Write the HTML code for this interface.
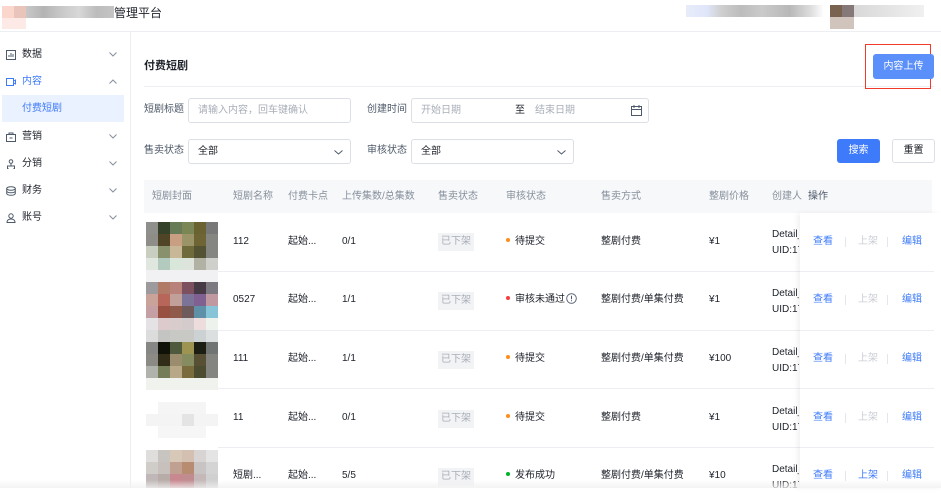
<!DOCTYPE html>
<html><head><meta charset="utf-8"><style>
*{margin:0;padding:0;box-sizing:border-box;line-height:18px}
body{width:941px;height:488px;overflow:hidden;background:#fff;font-family:"Liberation Sans","Noto Sans CJK SC",sans-serif;font-size:10px;color:#1d2129;position:relative}
.abs{position:absolute;white-space:nowrap}
.hdr{left:0;top:0;width:941px;height:32px;border-bottom:1px solid #eceef1;background:#fff}
.side{left:0;top:32px;width:131px;height:456px;border-right:1px solid #eceef1}
.mi{position:absolute;left:0;width:125px;height:18px;font-size:10px;color:#1d2129}
.mi .ic{position:absolute;left:6px;top:4px;width:10px;height:10px}
.mi .t{position:absolute;left:22px;top:0}
.mi .ar{position:absolute;left:109px;top:6px}
.inp{border:1px solid #dcdfe6;border-radius:3px;height:25px;background:#fff}
.ph{color:#a9aeb8;font-size:10px}
.lbl{font-size:10px;color:#4e5969}
.th{font-size:10px;color:#86909c}
.cell{font-size:10px;color:#1d2129}
.tag{background:#f2f3f5;color:#a9aeb8;font-size:10px;padding:2px 3px;line-height:14px}
.dot{display:inline-block;width:4px;height:4px;border-radius:50%;margin-right:5px;vertical-align:middle;position:relative;top:-1px}
.lnk{color:#3e7bfa;font-size:10px}
.dis{color:#c9cdd4;font-size:10px}
.sep{width:1px;height:10px;background:#e5e6eb}
.det{line-height:16px;width:27px;overflow:hidden}
</style></head><body>
<div class="abs hdr"></div>
<div class="abs" style="left:2px;top:6px;width:12px;height:12px;background:#fbd6cc"></div>
<div class="abs" style="left:14px;top:6px;width:12px;height:12px;background:#e8c4bb"></div>
<div class="abs" style="left:26px;top:6px;width:88px;height:12px;background:linear-gradient(90deg,#c8c8c8,#b4b4b4 20%,#c8c8c8 40%,#d8d8d8 60%,#bcbcbc 80%,#c4c4c4)"></div>
<div class="abs" style="left:2px;top:18px;width:24px;height:11px;background:#fdeae6"></div>
<div class="abs" style="left:114px;top:5px;font-size:12px;line-height:16px;color:#1d2129">管理平台</div>
<div class="abs" style="left:686px;top:5px;width:138px;height:12px;background:linear-gradient(90deg,#e8ecfa 0,#e0e6fa 15%,#d0d0d0 25%,#bcbcbc 40%,#cacaca 55%,#b8b8b8 75%,#dcdcdc 90%,#fff)"></div>
<div class="abs" style="left:830px;top:5px;width:12px;height:12px;background:#7a6250"></div>
<div class="abs" style="left:842px;top:5px;width:12px;height:12px;background:#857878"></div>
<div class="abs" style="left:854px;top:5px;width:70px;height:12px;background:linear-gradient(90deg,#d8d8d8,#e4e4e4,#f0f0f0)"></div>
<div class="abs" style="left:830px;top:17px;width:24px;height:12px;background:#d0c4bc"></div>

<div class="abs side"></div>
<div class="mi" style="top:46px"><svg class="ic" viewBox="0 0 10 10"><rect x=".5" y=".5" width="9" height="9" fill="none" stroke="#4e5969"/><path d="M3 7V5M5 7V3M7 7V4" stroke="#4e5969"/></svg><span class="t">数据</span><svg class="ar" width="8" height="5" viewBox="0 0 8 5"><path d="M.5.5L4 4 7.5.5" fill="none" stroke="#86909c"/></svg></div>
<div class="mi" style="top:73px;color:#3e7bfa"><svg class="ic" viewBox="0 0 10 10"><rect x=".5" y="1.5" width="7" height="7" fill="none" stroke="#3e7bfa"/><path d="M7.5 4L9.5 3V7L7.5 6" fill="none" stroke="#3e7bfa"/></svg><span class="t">内容</span><svg class="ar" width="8" height="5" viewBox="0 0 8 5"><path d="M.5 4.5L4 1 7.5 4.5" fill="none" stroke="#86909c"/></svg></div>
<div class="abs" style="left:2px;top:95px;width:122px;height:27px;background:#eaf1ff"></div>
<div class="abs" style="left:22px;top:100px;color:#3e7bfa;font-size:10px">付费短剧</div>
<div class="mi" style="top:128px"><svg class="ic" viewBox="0 0 10 10"><rect x=".5" y="2.5" width="9" height="7" fill="none" stroke="#4e5969"/><path d="M3 2.5V1h4v1.5M3.5 6h3" fill="none" stroke="#4e5969"/></svg><span class="t">营销</span><svg class="ar" width="8" height="5" viewBox="0 0 8 5"><path d="M.5.5L4 4 7.5.5" fill="none" stroke="#86909c"/></svg></div>
<div class="mi" style="top:155px"><svg class="ic" viewBox="0 0 10 10"><circle cx="5" cy="2.5" r="1.8" fill="none" stroke="#4e5969"/><path d="M5 4.5v2M1.5 9.5v-2.5h7v2.5M1 9.5h1.5M7.5 9.5h1.5" fill="none" stroke="#4e5969"/></svg><span class="t">分销</span><svg class="ar" width="8" height="5" viewBox="0 0 8 5"><path d="M.5.5L4 4 7.5.5" fill="none" stroke="#86909c"/></svg></div>
<div class="mi" style="top:182px"><svg class="ic" viewBox="0 0 10 10"><ellipse cx="5" cy="2.5" rx="4.3" ry="1.8" fill="none" stroke="#4e5969"/><path d="M.7 2.5v5c0 1 2 1.8 4.3 1.8s4.3-.8 4.3-1.8v-5M.7 5c0 1 2 1.8 4.3 1.8S9.3 6 9.3 5" fill="none" stroke="#4e5969"/></svg><span class="t">财务</span><svg class="ar" width="8" height="5" viewBox="0 0 8 5"><path d="M.5.5L4 4 7.5.5" fill="none" stroke="#86909c"/></svg></div>
<div class="mi" style="top:209px"><svg class="ic" viewBox="0 0 10 10"><circle cx="5" cy="3" r="2.2" fill="none" stroke="#4e5969"/><path d="M1 9.5c0-2.5 2-3.5 4-3.5s4 1 4 3.5z" fill="none" stroke="#4e5969"/></svg><span class="t">账号</span><svg class="ar" width="8" height="5" viewBox="0 0 8 5"><path d="M.5.5L4 4 7.5.5" fill="none" stroke="#86909c"/></svg></div>

<div class="abs" style="left:144px;top:57px;font-size:11px;font-weight:bold">付费短剧</div>
<div class="abs" style="left:144px;top:86px;width:790px;height:1px;background:#eceef1"></div>
<div class="abs" style="left:865px;top:44px;width:66px;height:45px;border:1.5px solid #f23a2a"></div>
<div class="abs" style="left:873px;top:54px;width:61px;height:25px;background:#5b8ff9;border-radius:3px;color:#fff;font-size:10px;line-height:25px;text-align:center">内容上传</div>

<div class="abs lbl" style="left:144px;top:101px">短剧标题</div>
<div class="abs inp" style="left:188px;top:98px;width:163px"><span class="abs ph" style="left:9px;top:3px">请输入内容，回车键确认</span></div>
<div class="abs lbl" style="left:367px;top:101px">创建时间</div>
<div class="abs inp" style="left:411px;top:98px;width:238px">
<span class="abs ph" style="left:9px;top:3px">开始日期</span>
<span class="abs" style="left:103px;top:3px;font-size:10px">至</span>
<span class="abs ph" style="left:123px;top:3px">结束日期</span>
<svg class="abs" style="left:219px;top:6px" width="11" height="11" viewBox="0 0 11 11"><rect x=".5" y="1.5" width="10" height="9" fill="none" stroke="#4e5969"/><path d="M.5 4.5h10M3 0v3M8 0v3" stroke="#4e5969"/></svg></div>

<div class="abs lbl" style="left:144px;top:142px">售卖状态</div>
<div class="abs inp" style="left:188px;top:139px;width:163px"><span class="abs" style="left:9px;top:3px">全部</span><svg class="abs" style="left:145px;top:10px" width="9" height="5" viewBox="0 0 9 5"><path d="M.5.5L4.5 4 8.5.5" fill="none" stroke="#4e5969"/></svg></div>
<div class="abs lbl" style="left:367px;top:142px">审核状态</div>
<div class="abs inp" style="left:411px;top:139px;width:163px"><span class="abs" style="left:9px;top:3px">全部</span><svg class="abs" style="left:145px;top:10px" width="9" height="5" viewBox="0 0 9 5"><path d="M.5.5L4.5 4 8.5.5" fill="none" stroke="#4e5969"/></svg></div>
<div class="abs" style="left:837px;top:139px;width:43px;height:24px;background:#3e7bfa;border-radius:3px;color:#fff;line-height:24px;text-align:center">搜索</div>
<div class="abs" style="left:892px;top:139px;width:43px;height:24px;border:1px solid #dcdfe6;border-radius:3px;line-height:22px;text-align:center">重置</div>

<div class="abs" style="left:144px;top:180px;width:788px;height:33px;background:#f7f8fa"></div>
<div class="abs th" style="left:152px;top:188px">短剧封面</div>
<div class="abs th" style="left:233px;top:188px">短剧名称</div>
<div class="abs th" style="left:288px;top:188px">付费卡点</div>
<div class="abs th" style="left:342px;top:188px">上传集数/总集数</div>
<div class="abs th" style="left:438px;top:188px">售卖状态</div>
<div class="abs th" style="left:506px;top:188px">审核状态</div>
<div class="abs th" style="left:601px;top:188px">售卖方式</div>
<div class="abs th" style="left:709px;top:188px">整剧价格</div>
<div class="abs th" style="left:772px;top:188px">创建人</div>
<div class="abs th" style="left:808px;top:188px;color:#4e5969">操作</div>

<div class="abs" style="left:218px;top:271px;width:716px;height:1px;background:#eceef1"></div>
<div class="abs" style="left:218px;top:330px;width:716px;height:1px;background:#eceef1"></div>
<div class="abs" style="left:218px;top:388px;width:716px;height:1px;background:#eceef1"></div>
<div class="abs" style="left:218px;top:447px;width:716px;height:1px;background:#eceef1"></div>
<div class="abs" style="left:800px;top:213px;width:141px;height:275px;background:#fff;box-shadow:-3px 0 5px rgba(0,0,0,.05)"></div>
<div class="abs" style="left:800px;top:271px;width:134px;height:1px;background:#eceef1"></div>
<div class="abs" style="left:800px;top:330px;width:134px;height:1px;background:#eceef1"></div>
<div class="abs" style="left:800px;top:388px;width:134px;height:1px;background:#eceef1"></div>
<div class="abs" style="left:800px;top:447px;width:134px;height:1px;background:#eceef1"></div>

<svg class="abs" style="left:146px;top:222px" width="72" height="266" viewBox="0 0 72 266" shape-rendering="crispEdges">
<rect x="0" y="0" width="12" height="12" fill="#8f8f8c"/><rect x="12" y="0" width="12" height="12" fill="#354229"/><rect x="24" y="0" width="12" height="12" fill="#687b57"/><rect x="36" y="0" width="12" height="12" fill="#7a8653"/><rect x="48" y="0" width="12" height="12" fill="#6b6232"/><rect x="60" y="0" width="12" height="12" fill="#777877"/>
<rect x="0" y="12" width="12" height="12" fill="#8e8d88"/><rect x="12" y="12" width="12" height="12" fill="#4f4526"/><rect x="24" y="12" width="12" height="12" fill="#c89f83"/><rect x="36" y="12" width="12" height="12" fill="#9c9469"/><rect x="48" y="12" width="12" height="12" fill="#6f6434"/><rect x="60" y="12" width="12" height="12" fill="#858582"/>
<rect x="0" y="24" width="12" height="12" fill="#c9cfc0"/><rect x="12" y="24" width="12" height="12" fill="#88906c"/><rect x="24" y="24" width="12" height="12" fill="#c8b898"/><rect x="36" y="24" width="12" height="12" fill="#6f6b3a"/><rect x="48" y="24" width="12" height="12" fill="#535232"/><rect x="60" y="24" width="12" height="12" fill="#858582"/>
<rect x="0" y="36" width="12" height="12" fill="#dfe7df"/><rect x="12" y="36" width="12" height="12" fill="#b3cbbe"/><rect x="24" y="36" width="12" height="12" fill="#d9e6da"/><rect x="36" y="36" width="12" height="12" fill="#dde4dc"/><rect x="48" y="36" width="12" height="12" fill="#b1b2a3"/><rect x="60" y="36" width="12" height="12" fill="#cfcfcc"/>
<rect x="0" y="48" width="72" height="12" fill="#f1f1f3"/>
<rect x="0" y="60" width="12" height="12" fill="#9c9a9c"/><rect x="12" y="60" width="12" height="12" fill="#b07a66"/><rect x="24" y="60" width="12" height="12" fill="#b8827a"/><rect x="36" y="60" width="12" height="12" fill="#7d5060"/><rect x="48" y="60" width="12" height="12" fill="#453a45"/><rect x="60" y="60" width="12" height="12" fill="#7c7a80"/>
<rect x="0" y="72" width="12" height="12" fill="#c9a39a"/><rect x="12" y="72" width="12" height="12" fill="#b8655a"/><rect x="24" y="72" width="12" height="12" fill="#c0a098"/><rect x="36" y="72" width="12" height="12" fill="#7c7498"/><rect x="48" y="72" width="12" height="12" fill="#806090"/><rect x="60" y="72" width="12" height="12" fill="#c099a0"/>
<rect x="0" y="84" width="12" height="12" fill="#c4a0a4"/><rect x="12" y="84" width="12" height="12" fill="#985040"/><rect x="24" y="84" width="12" height="12" fill="#905a4a"/><rect x="36" y="84" width="12" height="12" fill="#6e5a5a"/><rect x="48" y="84" width="12" height="12" fill="#5e90a8"/><rect x="60" y="84" width="12" height="12" fill="#88c4d8"/>
<rect x="0" y="96" width="12" height="12" fill="#e4e2e4"/><rect x="12" y="96" width="12" height="12" fill="#dccacc"/><rect x="24" y="96" width="12" height="12" fill="#d8cccc"/><rect x="36" y="96" width="12" height="12" fill="#d4cccc"/><rect x="48" y="96" width="12" height="12" fill="#ecdcdc"/><rect x="60" y="96" width="12" height="12" fill="#eef2ec"/>
<rect x="0" y="108" width="12" height="12" fill="#dcdcdc"/><rect x="12" y="108" width="12" height="12" fill="#c4c4c2"/><rect x="24" y="108" width="12" height="12" fill="#c8c8c4"/><rect x="36" y="108" width="12" height="12" fill="#c8c8c4"/><rect x="48" y="108" width="12" height="12" fill="#ccd2d4"/><rect x="60" y="108" width="12" height="12" fill="#dcdfe0"/>
<rect x="0" y="120" width="12" height="12" fill="#868684"/><rect x="12" y="120" width="12" height="12" fill="#101208"/><rect x="24" y="120" width="12" height="12" fill="#4f5a3c"/><rect x="36" y="120" width="12" height="12" fill="#9c9450"/><rect x="48" y="120" width="12" height="12" fill="#1c1e14"/><rect x="60" y="120" width="12" height="12" fill="#707472"/>
<rect x="0" y="132" width="12" height="12" fill="#8c8a84"/><rect x="12" y="132" width="12" height="12" fill="#302c18"/><rect x="24" y="132" width="12" height="12" fill="#9c8c6e"/><rect x="36" y="132" width="12" height="12" fill="#848c60"/><rect x="48" y="132" width="12" height="12" fill="#585034"/><rect x="60" y="132" width="12" height="12" fill="#848480"/>
<rect x="0" y="144" width="12" height="12" fill="#b0b2ac"/><rect x="12" y="144" width="12" height="12" fill="#747c58"/><rect x="24" y="144" width="12" height="12" fill="#b8a888"/><rect x="36" y="144" width="12" height="12" fill="#7a6c3c"/><rect x="48" y="144" width="12" height="12" fill="#4c4c30"/><rect x="60" y="144" width="12" height="12" fill="#848480"/>
<rect x="0" y="156" width="72" height="12" fill="#f0f2ee"/>
<rect x="12" y="180" width="48" height="12" fill="#f5f5f5"/>
<rect x="0" y="192" width="72" height="12" fill="#f4f4f4"/><rect x="36" y="192" width="12" height="12" fill="#e4e4e4"/>
<rect x="12" y="204" width="48" height="12" fill="#f6f6f6"/>
<rect x="0" y="228" width="12" height="12" fill="#e0dedc"/><rect x="12" y="228" width="12" height="12" fill="#c8c4c0"/><rect x="24" y="228" width="12" height="12" fill="#d8c8b8"/><rect x="36" y="228" width="12" height="12" fill="#d4c0b0"/><rect x="48" y="228" width="12" height="12" fill="#d8d4d4"/><rect x="60" y="228" width="12" height="12" fill="#e4e4e4"/>
<rect x="0" y="240" width="12" height="12" fill="#d0ccc8"/><rect x="12" y="240" width="12" height="12" fill="#c8c0bc"/><rect x="24" y="240" width="12" height="12" fill="#c0a090"/><rect x="36" y="240" width="12" height="12" fill="#b88c70"/><rect x="48" y="240" width="12" height="12" fill="#c8c4c4"/><rect x="60" y="240" width="12" height="12" fill="#d4d4d4"/>
<rect x="0" y="252" width="12" height="14" fill="#c0b8b8"/><rect x="12" y="252" width="12" height="14" fill="#b8aca8"/><rect x="24" y="252" width="12" height="14" fill="#c88890"/><rect x="36" y="252" width="12" height="14" fill="#c08c90"/><rect x="48" y="252" width="12" height="14" fill="#c4b8b8"/><rect x="60" y="252" width="12" height="14" fill="#d0d0d0"/>
</svg>

<div class="abs cell" style="left:233px;top:233px">112</div><div class="abs cell" style="left:288px;top:233px">起始...</div><div class="abs cell" style="left:342px;top:233px">0/1</div><div class="abs tag" style="left:438px;top:233px">已下架</div><div class="abs cell" style="left:506px;top:233px"><span class="dot" style="background:#ff8d1a"></span>待提交</div><div class="abs cell" style="left:601px;top:233px">整剧付费</div><div class="abs cell" style="left:709px;top:233px">¥1</div><div class="abs cell det" style="left:772px;top:227px">Detail_<br>UID:17</div>
<div class="abs cell" style="left:233px;top:291px">0527</div><div class="abs cell" style="left:288px;top:291px">起始...</div><div class="abs cell" style="left:342px;top:291px">1/1</div><div class="abs tag" style="left:438px;top:292px">已下架</div><div class="abs cell" style="left:506px;top:291px"><span class="dot" style="background:#f53f3f"></span>审核未通过<svg width="11" height="11" viewBox="0 0 11 11" style="vertical-align:middle;position:relative;top:-1px;margin-left:1px"><circle cx="5.5" cy="5.5" r="4.8" fill="none" stroke="#4e5969" stroke-width=".9"/><path d="M5.5 2.8v3.5M5.5 7.3v1" stroke="#4e5969"/></svg></div><div class="abs cell" style="left:601px;top:291px">整剧付费/单集付费</div><div class="abs cell" style="left:709px;top:291px">¥1</div><div class="abs cell det" style="left:772px;top:286px">Detail_<br>UID:17</div>
<div class="abs cell" style="left:233px;top:350px">111</div><div class="abs cell" style="left:288px;top:350px">起始...</div><div class="abs cell" style="left:342px;top:350px">1/1</div><div class="abs tag" style="left:438px;top:351px">已下架</div><div class="abs cell" style="left:506px;top:350px"><span class="dot" style="background:#ff8d1a"></span>待提交</div><div class="abs cell" style="left:601px;top:350px">整剧付费/单集付费</div><div class="abs cell" style="left:709px;top:350px">¥100</div><div class="abs cell det" style="left:772px;top:345px">Detail_<br>UID:17</div>
<div class="abs cell" style="left:233px;top:409px">11</div><div class="abs cell" style="left:288px;top:409px">起始...</div><div class="abs cell" style="left:342px;top:409px">0/1</div><div class="abs tag" style="left:438px;top:410px">已下架</div><div class="abs cell" style="left:506px;top:409px"><span class="dot" style="background:#ff8d1a"></span>待提交</div><div class="abs cell" style="left:601px;top:409px">整剧付费</div><div class="abs cell" style="left:709px;top:409px">¥1</div><div class="abs cell det" style="left:772px;top:404px">Detail_<br>UID:17</div>
<div class="abs cell" style="left:233px;top:467px">短剧...</div><div class="abs cell" style="left:288px;top:467px">起始...</div><div class="abs cell" style="left:342px;top:467px">5/5</div><div class="abs tag" style="left:438px;top:468px">已下架</div><div class="abs cell" style="left:506px;top:467px"><span class="dot" style="background:#00b42a"></span>发布成功</div><div class="abs cell" style="left:601px;top:467px">整剧付费/单集付费</div><div class="abs cell" style="left:709px;top:467px">¥10</div><div class="abs cell det" style="left:772px;top:462px">Detail_<br>UID:17</div>

<div class="abs lnk" style="left:813px;top:233px">查看</div><div class="abs sep" style="left:845px;top:237px"></div><div class="abs dis" style="left:858px;top:233px">上架</div><div class="abs sep" style="left:887px;top:237px"></div><div class="abs lnk" style="left:902px;top:233px">编辑</div>
<div class="abs lnk" style="left:813px;top:291px">查看</div><div class="abs sep" style="left:845px;top:295px"></div><div class="abs dis" style="left:858px;top:291px">上架</div><div class="abs sep" style="left:887px;top:295px"></div><div class="abs lnk" style="left:902px;top:291px">编辑</div>
<div class="abs lnk" style="left:813px;top:350px">查看</div><div class="abs sep" style="left:845px;top:354px"></div><div class="abs dis" style="left:858px;top:350px">上架</div><div class="abs sep" style="left:887px;top:354px"></div><div class="abs lnk" style="left:902px;top:350px">编辑</div>
<div class="abs lnk" style="left:813px;top:409px">查看</div><div class="abs sep" style="left:845px;top:413px"></div><div class="abs dis" style="left:858px;top:409px">上架</div><div class="abs sep" style="left:887px;top:413px"></div><div class="abs lnk" style="left:902px;top:409px">编辑</div>
<div class="abs lnk" style="left:813px;top:467px">查看</div><div class="abs sep" style="left:845px;top:471px"></div><div class="abs lnk" style="left:858px;top:467px">上架</div><div class="abs sep" style="left:887px;top:471px"></div><div class="abs lnk" style="left:902px;top:467px">编辑</div>
<div class="abs" style="left:0;top:480px;width:941px;height:8px;background:linear-gradient(rgba(255,255,255,0),rgba(240,240,240,.8))"></div>
</body></html>
